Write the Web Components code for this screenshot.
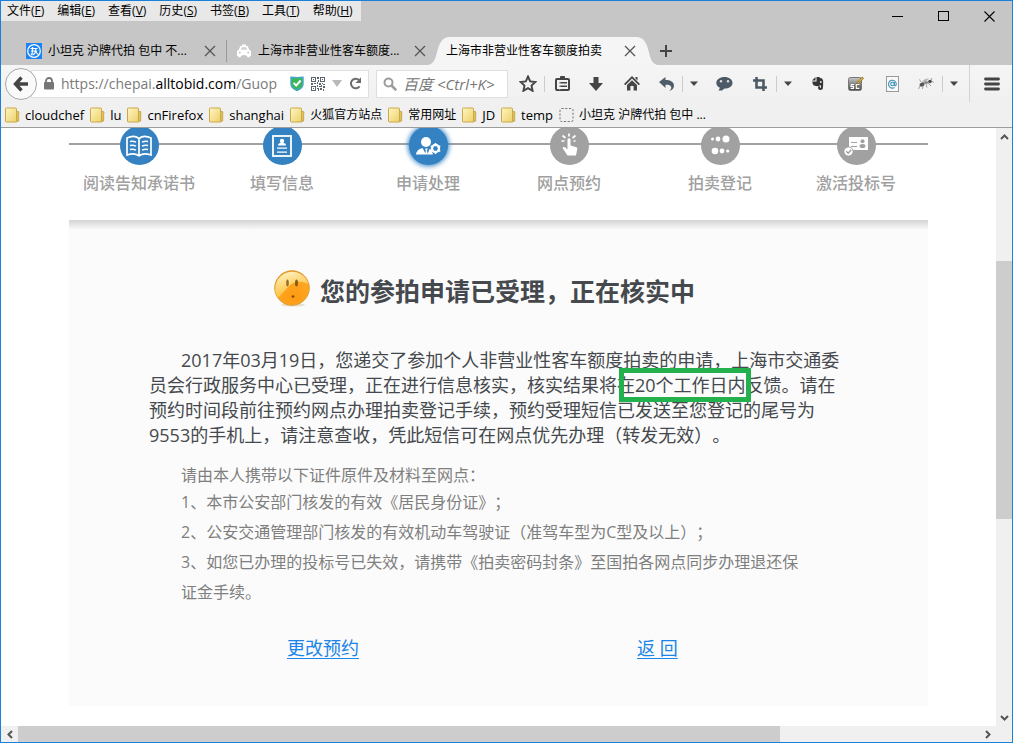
<!DOCTYPE html>
<html lang="zh-CN">
<head>
<meta charset="utf-8">
<title>上海市非营业性客车额度拍卖</title>
<style>
  body { margin: 0; font-family: "Open Sans", "Noto Sans CJK SC", sans-serif; font-size: 12px; color: #000; text-spacing-trim: space-all; }
</style>
</head>
<body>
<app-window>
  <title-bar slot="title">
    <menu-item slot="menu" key="F">文件</menu-item>
    <menu-item slot="menu" key="E">编辑</menu-item>
    <menu-item slot="menu" key="V">查看</menu-item>
    <menu-item slot="menu" key="S">历史</menu-item>
    <menu-item slot="menu" key="B">书签</menu-item>
    <menu-item slot="menu" key="T">工具</menu-item>
    <menu-item slot="menu" key="H">帮助</menu-item>
    <browser-tab slot="tabs" divided><ui-icon slot="icon" name="tank"></ui-icon>小坦克 沪牌代拍 包中 不...</browser-tab>
    <browser-tab slot="tabs"><ui-icon slot="icon" name="car"></ui-icon>上海市非营业性客车额度...</browser-tab>
    <browser-tab slot="tabs" active>上海市非营业性客车额度拍卖</browser-tab>
  </title-bar>
  <nav-bar slot="nav"></nav-bar>
  <bookmark-bar slot="bookmarks">
    <book-mark icon="folder" latin>cloudchef</book-mark>
    <book-mark icon="folder" latin>lu</book-mark>
    <book-mark icon="folder" latin>cnFirefox</book-mark>
    <book-mark icon="folder" latin>shanghai</book-mark>
    <book-mark icon="folder">火狐官方站点</book-mark>
    <book-mark icon="folder">常用网址</book-mark>
    <book-mark icon="folder" latin>JD</book-mark>
    <book-mark icon="folder" latin>temp</book-mark>
    <book-mark icon="dotted">小坦克 沪牌代拍 包中 ...</book-mark>
  </bookmark-bar>
  <step-track>
    <page-step icon="book" state="done">阅读告知承诺书</page-step>
    <page-step icon="form" state="done">填写信息</page-step>
    <page-step icon="person" state="current">申请处理</page-step>
    <page-step icon="tap">网点预约</page-step>
    <page-step icon="dots">拍卖登记</page-step>
    <page-step icon="card">激活投标号</page-step>
  </step-track>
  <notice-panel>
    <span slot="title">您的参拍申请已受理，正在核实中</span>
    <span slot="text">2017年03月19日，您递交了参加个人非营业性客车额度拍卖的申请，上海市交通委员会行政服务中心已受理，正在进行信息核实，核实结果将在<mark-box>20个工作日内</mark-box>反馈。请在预约时间段前往预约网点办理拍卖登记手续，预约受理短信已发送至您登记的尾号为9553的手机上，请注意查收，凭此短信可在网点优先办理（转发无效）。</span>
    <span slot="lead">请由本人携带以下证件原件及材料至网点：</span>
    <list-line>1、本市公安部门核发的有效《居民身份证》；</list-line>
    <list-line>2、公安交通管理部门核发的有效机动车驾驶证（准驾车型为C型及以上）；</list-line>
    <list-line>3、如您已办理的投标号已失效，请携带《拍卖密码封条》至国拍各网点同步办理退还保证金手续。</list-line>
    <text-link slot="links">更改预约</text-link>
    <text-link slot="links">返 回</text-link>
  </notice-panel>
</app-window>

<script>
const icons = {
  tank: [16, 16, '<rect width="16" height="16" fill="#1c83f5"/><circle cx="8" cy="8" r="6.300" fill="none" stroke="#fff" stroke-width="1.200"/><path d="M4.500 5.500h7M5 8h4.500M6.500 4v4q0 3-1.500 4M9.500 8q0 3-3 4M9.500 5.500q.3 3.500 2.300 6" fill="none" stroke="#fff" stroke-width="1.200"/>'],
  car: [16, 16, '<path d="M6 1.500h4v1.500h1.700l1.500 3.800q1.800.4 1.800 2.200v4h-1.200v1.300h-2.600v-1.300q-3.200-2.200-6.400 0v1.300H2.200v-1.300H1V9q0-1.800 1.800-2.200L4.300 3H6z" fill="#fff"/><path d="M4.800 6.700L5.700 4.200h4.600l.9 2.500z" fill="#d2d2d2"/><circle cx="3.800" cy="9.600" r="1" fill="#c6c6c6"/><circle cx="12.200" cy="9.600" r="1" fill="#c6c6c6"/>'],
  close: [12, 12, '<path d="M1 1l10 10M11 1L1 11" stroke="#555" stroke-width="1.300" fill="none"/>'],
  plus: [12, 12, '<path d="M6 0v12M0 6h12" stroke="#444" stroke-width="2" fill="none"/>'],
  min: [11, 11, '<path d="M0 5.500h11" stroke="#000"/>'],
  max: [11, 11, '<rect x=".5" y=".5" width="10" height="9" fill="none" stroke="#000"/>'],
  shut: [11, 11, '<path d="M.5 .5l10 10M10.500 .5l-10 10" stroke="#000" stroke-width="1.100"/>'],
  back: [16, 16, '<path d="M8.500 1.500L2.500 8l6 6.500M3 8h12" fill="none" stroke="#454545" stroke-width="3.400"/>'],
  lock: [10, 13, '<rect y="5" width="10" height="7.500" rx="1" fill="#777"/><path d="M2 6V4a3 3 0 0 1 6 0v2" fill="none" stroke="#777" stroke-width="1.800"/>'],
  shield: [14, 15, '<path d="M1 1.200Q7 2 13 1.200V8q0 4-6 6.500Q1 12 1 8z" fill="#3cb65b" stroke="#42a5c9" stroke-width="1.400"/><path d="M3.600 6.800l2.600 2.700 4.400-5" fill="none" stroke="#fff" stroke-width="1.900"/>'],
  qr: [14, 14, '<g fill="none" stroke="#5b6570"><rect x=".5" y=".5" width="4" height="4"/><rect x="9.500" y=".5" width="4" height="4"/><rect x=".5" y="9.500" width="4" height="4"/></g><path d="M2 2h1v1H2zM11 2h1v1h-1zM2 11h1v1H2zM6 0h2v2H6zM7 3h1v2H7zM6 5h1v2H6zM0 6h2v2H0zM3 6h2v1H3zM8 6h2v2H8zM11 6h1v1h-1zM12 7h2v1h-2zM6 8h1v2H6zM8 9h2v1H8zM10 8h1v2h-1zM12 9h2v2h-2zM6 11h2v1H6zM7 12h1v2H7zM9 11h2v2H9zM12 12h1v2h-1z" fill="#5b6570"/>'],
  tri: [10, 7, '<path d="M0 0h10L5 7z" fill="#b9b9b9"/>'],
  reload: [13, 13, '<path d="M10.600 9.300A4.800 4.800 0 1 1 10 2.900" fill="none" stroke="#6d6d6d" stroke-width="2"/><path d="M12 .3v5.700H6.500z" fill="#6d6d6d"/>'],
  search: [14, 14, '<circle cx="5.500" cy="5.500" r="4" fill="none" stroke="#9b9b9b" stroke-width="2"/><path d="M8.500 8.500l4.700 4.700" stroke="#9b9b9b" stroke-width="2.600"/>'],
  star: [18, 17, '<path d="M9 1.500l2.200 4.900 5.200.6-3.900 3.600 1.100 5.200L9 13.200l-4.600 2.600 1.100-5.200L1.600 7l5.200-.6z" fill="none" stroke="#454545" stroke-width="1.900"/>'],
  clip: [15, 15, '<rect x="1" y="3" width="13" height="11" rx="1" fill="none" stroke="#454545" stroke-width="2"/><rect x="5" y="0" width="5" height="4" rx="1" fill="#454545"/><path d="M4 6.800h8M4 10.300h8" stroke="#454545" stroke-width="1.400"/><path d="M4.800 4v10" stroke="#f2f2f2" stroke-width=".8"/>'],
  down: [14, 14, '<path d="M4.500 0h5v6H14l-7 8-7-8h4.500z" fill="#454545"/>'],
  home: [16, 15, '<path d="M11.500 1h2v3.500l-2-2zM8 0l8 8-1.300 1.200L8 2.600 1.300 9.200 0 8z" fill="#454545"/><path d="M3 9l5-4.800L13 9v5.500H9.600V10H6.400v4.500H3z" fill="#454545"/>'],
  undo: [15, 14, '<path d="M0 5L6.500 0v3c5 0 8.500 2 8.500 5.500 0 3-2 5-5 5.500 2-1.500 2.500-2.600 2.200-4-.4-1.700-2.700-2.300-5.700-2.200V11z" fill="#4f5d6b"/>'],
  caret: [8, 5, '<path d="M0 .5h8L4 5z" fill="#454545"/>'],
  chat: [17, 14, '<path d="M8.500 0C13 0 16.500 2.500 16.500 5.900c0 3.300-3.500 5.600-8 5.600L6 13.400H2.500L4 10.700C1.700 9.700.3 8 .3 5.900.3 2.500 4 0 8.500 0z" fill="#4c5966"/><circle cx="5" cy="4.300" r="1.200" fill="#ddd"/><circle cx="12" cy="4.300" r="1.200" fill="#ddd"/>'],
  crop: [14, 14, '<path d="M3.500 0v10.500H14M0 3.500h10.500V14" fill="none" stroke="#4c5966" stroke-width="2.600"/>'],
  elephant: [12, 13, '<path d="M3.500 0v3.500H0zM4.500 0h2.700l1 1q2.800 0 3 3.500 0 5-.5 7.500-.7 1-2.700 1-2.300-.5-2-2.500.4-1.500 2-1.300v1.500h1V8.200Q7.500 8 6.800 9.300 4 9.500 1.500 8.300.3 6.500.3 4.500h4.200z" fill="#363636"/><circle cx="8.800" cy="5" r=".9" fill="#eee"/>'],
  sc: [16, 15, '<defs><linearGradient id="g" x2="0" y2="1"><stop stop-color="#c9c9c9"/><stop offset="1" stop-color="#444"/></linearGradient></defs><rect x=".5" y="1.500" width="13" height="13" rx="2" fill="url(#g)" stroke="#777"/><path d="M6 8.500H3.300L3 10.400h2.500v2H2.600M11.400 8.500H8.300v3.900h3.100" fill="none" stroke="#fff" stroke-width="1.100"/><path d="M8.500 7.500L14 1l1.700 1.300-5.500 5.500z" fill="#e4ba3d" stroke="#6c5412" stroke-width=".6"/>'],
  at: [13, 16, '<rect x=".5" y=".5" width="12" height="15" fill="#f7f9fa" stroke="#999"/><circle cx="6.500" cy="8" r="1.800" fill="none" stroke="#3a93b4" stroke-width="1.100"/><path d="M8.300 6v3c.2 1.200 2 1 2-1A3.900 3.900 0 1 0 8.500 11.500" fill="none" stroke="#3a93b4" stroke-width="1.100"/>'],
  bug: [16, 13, '<ellipse cx="4" cy="7.500" rx="2.600" ry="2" fill="#555" transform="rotate(-25 4 7.500)"/><ellipse cx="8" cy="5.500" rx="2.200" ry="1.600" fill="#8a8a8a"/><circle cx="12" cy="4.500" r="1.800" fill="#4a4a4a"/><path d="M2 9L.5 12M5 9l-.5 3M8 7l1 3.500M10 6l3 3M3 5L1.500 2.500M13.500 4l2.300 1.500M13 3l1-2" stroke="#888" stroke-width=".8"/><path d="M4 5Q6 1 11 1.500 9 5 4 5z" fill="#aaa" opacity=".8"/>'],
  menu: [16, 14, '<path d="M1.500 2h13M1.500 7h13M1.500 12h13" stroke="#454545" stroke-width="2.800" stroke-linecap="round"/>'],
  folder: [15, 16, '<defs><linearGradient id="f" x2="1" y2="1"><stop stop-color="#fff6c2"/><stop offset="1" stop-color="#ecd06a"/></linearGradient></defs><path d="M10 4.500h3.500q1 1 .2 2V14l-3 1z" fill="#e3bf55" stroke="#b99634" stroke-width=".7"/><rect x=".5" y="1" width="11" height="14" rx=".8" fill="url(#f)" stroke="#cba94b"/>'],
  dotted: [15, 16, '<rect x="1" y="1.500" width="13" height="13" rx="1.500" fill="none" stroke="#777" stroke-dasharray="2.200 1.500"/>'],
  up: [9, 6, '<path d="M1 5l3.500-3.500L8 5" fill="none" stroke="#555" stroke-width="2"/>'],
  dn: [9, 6, '<path d="M1 1l3.500 3.500L8 1" fill="none" stroke="#555" stroke-width="2"/>'],
  lt: [6, 9, '<path d="M5 1L1.500 4.500 5 8" fill="none" stroke="#555" stroke-width="2"/>'],
  rt: [6, 9, '<path d="M1 1l3.500 3.500L1 8" fill="none" stroke="#555" stroke-width="2"/>'],
  book: [26, 24, '<path d="M13 4.500C10 2 5 2 1 4v17c4-1.500 9-1.500 12 .8 3-2.300 8-2.300 12-.8V4c-4-2-9-2-12 .5v17" fill="none" stroke="#fff" stroke-width="1.700"/><path d="M4 7.500q3-.8 6 .7M4 11.500q3-.8 6 .7M4 15.500q3-.8 6 .7M22 7.500q-3-.8-6 .7M22 11.500q-3-.8-6 .7M22 15.500q-3-.8-6 .7" fill="none" stroke="#fff" stroke-width="1.500"/>'],
  form: [20, 22, '<rect x="1" y="1" width="18" height="20" fill="none" stroke="#fff" stroke-width="1.800"/><circle cx="10" cy="6" r="2.200" fill="#fff"/><path d="M6 10.500q0-2.500 2.500-2.500h3q2.500 0 2.500 2.500zM5 12.500h10v1.200H5zM5 16.500h10v1.300H5z" fill="#fff"/>'],
  person: [26, 20, '<circle cx="11" cy="6" r="5" fill="#fff"/><path d="M1 18.500c.3-3.500 3-5.500 6.500-6.500l3.500 6.500zM12.500 18.500l2-5.500 2 .8 1.500 4.700zM10 12.500h2.800l-.8 2 .8 4h-2.600l.6-4z" fill="#fff"/><circle cx="20.500" cy="12.500" r="3.600" fill="none" stroke="#fff" stroke-width="2.200"/><path d="M20.500 7v11M15.700 9.800l9.600 5.500M15.700 15.300l9.600-5.500" stroke="#fff" stroke-width="1.500"/><circle cx="20.500" cy="12.500" r="2.200" fill="#3482c1"/>'],
  tap: [18, 26, '<path d="M7.500 6q1.500-1.500 3 0v6.500l6 1.800q1 .5.700 2L16 22.500H7.500L2.500 15q1-1.800 3-.4l2 1.900z" fill="#fff"/><path d="M9 3.500V.5M5.500 5L2.500 2.500M12.500 5l3-2.500M4.500 8H1.500M13.500 8h2" stroke="#fff" stroke-width="1.700"/>'],
  dots: [22, 24, '<g fill="#fff"><circle cx="3.500" cy="5" r="1.500"/><circle cx="9" cy="5" r="2.400"/><circle cx="17" cy="5" r="3.500"/><circle cx="6" cy="17" r="3.300"/><circle cx="13" cy="17" r="2.400"/><circle cx="18.700" cy="17" r="1.600"/></g>'],
  card: [26, 22, '<path d="M6 2h19v13H6z" fill="#fff"/><path d="M8 7.500h6M8 11.500h6" stroke="#a1a1a1" stroke-width="1.200"/><circle cx="19.500" cy="6.300" r="2" fill="#a1a1a1"/><ellipse cx="19.500" cy="11" rx="3" ry="2" fill="#a1a1a1"/><circle cx="5.500" cy="16.500" r="4.600" fill="#fff" stroke="#a1a1a1"/><path d="M3.200 16.300l2 2 3-3.600" fill="none" stroke="#a1a1a1" stroke-width="1.400"/>'],
  face: [38, 38, '<defs><radialGradient id="o" cx=".55" cy=".75" r=".7"><stop stop-color="#ff9a12"/><stop offset=".7" stop-color="#fda722"/><stop offset="1" stop-color="#f0971d"/></radialGradient><linearGradient id="h" x2=".4" y2="1"><stop stop-color="#fffbd8"/><stop offset="1" stop-color="#ffc940" stop-opacity=".7"/></linearGradient></defs><ellipse cx="19" cy="35" rx="12" ry="1.600" fill="#e6dfce"/><circle cx="18" cy="18" r="17.300" fill="url(#o)" stroke="#dd9c38"/><path d="M1.500 22A17 17 0 0 1 34.500 14Q23 8 15 16 8 24 4 27.500 2 25 1.500 22z" fill="url(#h)"/><ellipse cx="13.500" cy="13" rx="1.300" ry="3.600" fill="#9b6d20"/><ellipse cx="22.500" cy="13" rx="1.500" ry="3.600" fill="#8b5d10"/><ellipse cx="19" cy="26.500" rx="1.400" ry="1.200" fill="#8b4a08"/>']
};

function makeIcon(name) {
  const icon = document.createElement('ui-icon');
  icon.setAttribute('name', name);
  return icon;
}

function define(name, html, setup) {
  const template = document.createElement('template');
  template.innerHTML = html;
  customElements.define(name, class extends HTMLElement {
    constructor() {
      super();
      this.attachShadow({ mode: 'open' }).append(template.content.cloneNode(true));
    }
    connectedCallback() {
      if (setup && !this.ready) setup(this, this.shadowRoot);
      this.ready = true;
    }
  });
}

define('ui-icon', `<style>:host{display:block;flex:none}svg{display:block}</style><div></div>`, (el, root) => {
  const [w, h, body] = icons[el.getAttribute('name')];
  root.querySelector('div').innerHTML = `<svg width="${w}" height="${h}" viewBox="0 0 ${w} ${h}" aria-hidden="true">${body}</svg>`;
});

define('icon-button', `<style>
  :host{display:flex;flex:none;width:36px}
  :host([size="s"]){width:20px}
  :host([size="m"]){width:32px}
  :host([size="l"]){width:40px}
  :host([size="xl"]){width:46px}
  button{flex:1;display:flex;align-items:center;justify-content:center;border:0;padding:0;background:none}
</style><button></button>`, (el, root) => {
  const button = root.querySelector('button');
  button.setAttribute('aria-label', el.getAttribute('label'));
  button.append(makeIcon(el.getAttribute('icon')));
});

define('menu-item', `<style>
  :host{display:block}
  button{border:0;padding:0 6px;background:none;font:inherit;color:inherit;line-height:20px;white-space:nowrap}
</style><button><slot></slot>(<u></u>)</button>`, (el, root) => {
  root.querySelector('u').textContent = el.getAttribute('key');
});

define('browser-tab', `<style>
  :host{display:flex;align-items:center;box-sizing:border-box;position:relative;flex:0 1 210px;height:28px;padding:0 10px;gap:6px}
  :host([divided])::after{content:"";position:absolute;right:-1px;top:3px;bottom:3px;width:1px;background:#999}
  .shape{display:none}
  :host([active]) .shape{display:flex;position:absolute;inset:0 -13px 0 -9px}
  .fill{flex:1;background:#f5f5f5}
  .text{position:relative;flex:1;overflow:hidden;white-space:nowrap;line-height:20px}
  icon-button{position:relative;width:12px;height:20px}
</style>
<div class="shape"><svg width="23" height="28"><path d="M0 28C14 28 6 0 23 0V28z" fill="#f5f5f5"/></svg><div class="fill"></div><svg width="23" height="28"><path d="M23 28C9 28 17 0 0 0V28z" fill="#f5f5f5"/></svg></div>
<slot name="icon"></slot><span class="text" role="tab"><slot></slot></span><icon-button icon="close" label="关闭标签页"></icon-button>`);

define('title-bar', `<style>
  :host{display:block;background:#c6c6c6}
  .top{display:flex;justify-content:space-between;align-items:flex-start;height:36px}
  .menu{display:flex;gap:1px;background:#e8e8e8;height:20px;width:360px;box-sizing:border-box}
  .controls{display:flex;height:30px}
  .tabs{display:flex;height:28px;padding-left:15px}
</style>
<div class="top"><nav class="menu"><slot name="menu"></slot></nav>
<div class="controls"><icon-button size="xl" icon="min" label="最小化"></icon-button><icon-button size="xl" icon="max" label="最大化"></icon-button><icon-button size="xl" icon="shut" label="关闭"></icon-button></div></div>
<div class="tabs" role="tablist"><slot name="tabs"></slot><icon-button size="l" icon="plus" label="新建标签页"></icon-button></div>`);

define('nav-bar', `<style>
  :host{display:flex;align-items:stretch;height:37px;background:linear-gradient(#f5f5f5,#f0f0f0)}
  .back{align-self:center;position:relative;flex:none;box-sizing:border-box;width:32px;height:32px;margin-left:4px;border:1px solid #a8a8a8;border-radius:50%;background:#fafafa;display:flex;align-items:center;justify-content:center;padding:0}
  .field{align-self:center;display:flex;align-items:center;box-sizing:border-box;height:28px;background:#fff;border:1px solid #dedede}
  .url{flex:1;min-width:0;margin-left:-6px;padding:0 6px 0 12px;gap:7px}
  .address{flex:1;min-width:0;overflow:hidden;white-space:nowrap;font-size:14px;line-height:24px;color:#7a7a7a;outline:0}
  .address b{font-weight:400;color:#000}
  .search{width:132px;margin:0 4px 0 7px;padding:0 6px;gap:6px}
  input{flex:1;min-width:0;border:0;padding:0;outline:0;background:none;font:italic 15px "Open Sans","Noto Sans CJK SC",sans-serif}
  input::placeholder{color:#777}
  .sep{flex:none;width:1px;margin:11px 1px 10px 0;background:#c9ccd1}
  .long{flex:none;width:1px;margin:0 2px 0 5px;background:#d4d4d4}
</style>
<button class="back" aria-label="后退"><ui-icon name="back"></ui-icon></button>
<div class="field url"><ui-icon name="lock"></ui-icon>
<div class="address" role="textbox" aria-label="网址" contenteditable="true" spellcheck="false">https://chepai.<b>alltobid.com</b>/Guop</div>
<ui-icon name="shield"></ui-icon><ui-icon name="qr"></ui-icon><ui-icon name="tri"></ui-icon><ui-icon name="reload"></ui-icon></div>
<div class="field search"><ui-icon name="search"></ui-icon><input type="text" aria-label="搜索" placeholder="百度 &lt;Ctrl+K&gt;"></div>
<icon-button size="m" icon="star" label="收藏"></icon-button><span class="sep"></span>
<icon-button size="m" icon="clip" label="书签列表"></icon-button>
<icon-button icon="down" label="下载"></icon-button>
<icon-button icon="home" label="主页"></icon-button>
<icon-button size="m" icon="undo" label="撤销"></icon-button><span class="sep"></span>
<icon-button size="s" icon="caret" label="更多"></icon-button>
<icon-button size="l" icon="chat" label="聊天"></icon-button>
<icon-button size="m" icon="crop" label="截图"></icon-button><span class="sep"></span>
<icon-button size="s" icon="caret" label="更多"></icon-button>
<icon-button size="l" icon="elephant" label="笔记"></icon-button>
<icon-button icon="sc" label="脚本"></icon-button>
<icon-button icon="at" label="邮件"></icon-button>
<icon-button size="m" icon="bug" label="调试"></icon-button><span class="sep"></span>
<icon-button size="s" icon="caret" label="更多"></icon-button><span class="long"></span>
<icon-button size="l" icon="menu" label="菜单"></icon-button>`);

define('bookmark-bar', `<style>
  :host{display:flex;align-items:center;height:25px;padding-left:4px;gap:6px;background:#f0f0f0;border-bottom:1px solid #9c9c9c;overflow:hidden}
</style><slot></slot>`);

define('book-mark', `<style>
  :host{display:block;flex:none}
  :host([latin]){font-size:13px}
  a{display:flex;align-items:center;gap:5px;color:inherit;text-decoration:none;white-space:nowrap;line-height:20px}
</style><a href="#"><slot></slot></a>`, (el, root) => {
  root.querySelector('a').prepend(makeIcon(el.getAttribute('icon')));
});

define('step-track', `<style>
  :host{display:grid;grid-template-columns:140fr 146fr 146fr 136fr 166fr 106fr 19fr;padding-bottom:25px;background:linear-gradient(#a1a1a1,#a1a1a1) 0 15px/100% 2px no-repeat}
</style><slot></slot>`);

define('page-step', `<style>
  :host{display:flex;flex-direction:column;align-items:center;gap:6px;color:#a0a0a0;font-size:16px;font-weight:500;line-height:24px;white-space:nowrap;--disc:#a1a1a1}
  :host([state]){--disc:#3482c1}
  .disc{width:39px;height:39px;margin-top:-2px;border-radius:50%;background:var(--disc);display:flex;align-items:center;justify-content:center}
  :host([state="current"]) .disc{box-shadow:0 0 5px 1px #3482c1}
</style><div class="disc"></div><span><slot></slot></span>`, (el, root) => {
  root.querySelector('.disc').append(makeIcon(el.getAttribute('icon')));
});

define('mark-box', `<style>
  :host{position:relative;white-space:nowrap}
  :host::after{content:"";position:absolute;inset:-5px -5px -5px -16px;border:5px solid #22b14c}
</style><slot></slot>`);

define('list-line', `<style>:host{display:block;line-height:30px}</style><slot></slot>`);

define('text-link', `<style>:host{display:block}a{color:#1a84e8;font-size:18px;line-height:24px;text-underline-offset:3px}</style><a href="#"><slot></slot></a>`);

define('notice-panel', `<style>
  :host{display:block;padding:50px 79px 46px 80px;background:linear-gradient(#d4d4d4,#fbfbfb 10px)}
  h1{display:flex;align-items:center;gap:8px;margin:0;padding-left:125px;font-size:25px;line-height:36px;color:#45494d}
  .face{height:42px}
  p{margin:0}
  .text{margin-top:36px;font-size:18px;line-height:25px;text-indent:32px;color:#45494d}
  .list{margin-top:15px;padding:0 36px 0 32px;font-size:16px;line-height:24px;color:#7f7f7f}
  .links{display:grid;grid-template-columns:1fr 1fr;margin-top:29px}
  .links ::slotted(*){padding-left:138px}
</style>
<h1><ui-icon class="face" name="face"></ui-icon><slot name="title"></slot></h1>
<p class="text"><slot name="text"></slot></p>
<div class="list"><p><slot name="lead"></slot></p><slot></slot></div>
<div class="links"><slot name="links"></slot></div>`);

function scrollBar(direction, size, first, last) {
  return `<style>
  :host{display:flex;flex-direction:${direction};background:#f0f0f0}
  .before{flex:var(--before) 1 0}
  .thumb{flex:var(--thumb) 1 0;background:#cdcdcd}
  .after{flex:var(--after) 1 0}
  icon-button{${size}}
</style><icon-button icon="${first}" label="向前滚动"></icon-button><div class="before"></div><div class="thumb"></div><div class="after"></div><icon-button icon="${last}" label="向后滚动"></icon-button>`;
}
define('scroll-column', scrollBar('column', 'width:16px;height:17px', 'up', 'dn'));
define('scroll-row', scrollBar('row', 'width:17px;height:16px', 'lt', 'rt'));

define('app-window', `<style>
  :host{display:flex;flex-direction:column;box-sizing:border-box;min-height:100vh;border:1px solid #1a80d9;background:#f0f0f0}
  .view{flex:1;display:grid;grid-template-columns:1fr 16px;grid-template-rows:1fr 16px}
  main{overflow:hidden;background:#fff;padding:0 68px 20px}
  scroll-column{--before:116;--thumb:258;--after:190}
  scroll-row{--before:0;--thumb:762;--after:199}
</style>
<slot name="title"></slot><slot name="nav"></slot><slot name="bookmarks"></slot>
<div class="view"><main><slot></slot></main><scroll-column></scroll-column><scroll-row></scroll-row></div>`);
</script>
</body>
</html>
